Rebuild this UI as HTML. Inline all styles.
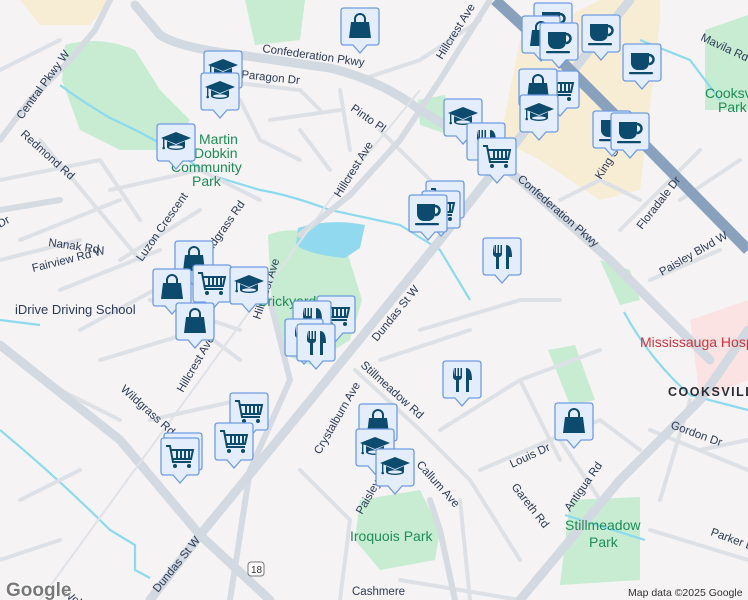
<!DOCTYPE html>
<html><head><meta charset="utf-8"><style>
html,body{margin:0;padding:0;width:748px;height:600px;overflow:hidden;background:#f5f3f4;}
svg{display:block}
text{font-family:"Liberation Sans",sans-serif;}
.lb{font-size:11.5px;fill:#2b3a55;}
.pk{font-size:14px;fill:#1e8c56;}
</style></head><body>
<svg width="748" height="600" viewBox="0 0 748 600" xmlns="http://www.w3.org/2000/svg" style="overflow:hidden">
<defs>
<g id="box">
<path d="M1 4 Q1 1 4 1 H36 Q39 1 39 4 V35 Q39 38 36 38 H27 L20 46 L13 38 H4 Q1 38 1 35 Z" fill="#e4edfc" stroke="#6f9be3" stroke-width="1.3"/>
</g>
<g id="cup"><use href="#box"/><g fill="#0c4a6e"><path d="M9 10 H27 V20 A7 7 0 0 1 20 27 H16 A7 7 0 0 1 9 20 Z"/><path d="M27 12 A4.5 4.5 0 0 1 27 21" fill="none" stroke="#0c4a6e" stroke-width="2.5"/><rect x="7" y="29" width="24" height="2.2" rx="1"/></g></g>
<g id="bag"><use href="#box"/><g fill="#0c4a6e"><path d="M11 15 H29 L31 31 H9 Z"/><path d="M15 16 V12 A5 5 0 0 1 25 12 V16" fill="none" stroke="#0c4a6e" stroke-width="2"/></g></g>
<g id="cart"><use href="#box"/><g fill="none" stroke="#0c4a6e" stroke-width="2"><path d="M6 9 H10 L13 25 H31"/><path d="M11 13 H33 L31 22 H13"/><path d="M17 13 V22 M21 13 V22 M25 13 V22 M29 13 V22"/></g><circle cx="15" cy="29" r="2" fill="#0c4a6e"/><circle cx="29" cy="29" r="2" fill="#0c4a6e"/></g>
<g id="edu"><use href="#box"/><g fill="#0c4a6e"><path d="M20 9 L35 15 L20 21 L5 15 Z"/><path d="M11 18 V24 A9 3 0 0 0 29 24 V18 L20 22 Z"/><rect x="7" y="15" width="1.4" height="9"/><circle cx="7.7" cy="25" r="1.3"/></g><ellipse cx="20" cy="24" rx="7" ry="1.6" fill="#e4edfc"/></g>
<g id="rest"><use href="#box"/><g fill="#0c4a6e"><path d="M11 8 V17 A3 3 0 0 0 14 20 V32 H17 V20 A3 3 0 0 0 20 17 V8 H18.5 V16 H17 V8 H15.5 V16 H14 V8 H12.5 V16 Z"/><path d="M24 32 V8 C29 8 30 14 30 20 L27 20 V32 Z"/></g></g>
</defs>

<path d="M20 0 H110 L90 25 H40 Z" fill="#f7ecd4"/>
<path d="M520 40 L600 0 H660 V20 L640 190 L600 200 L540 160 L500 140 Z" fill="#f7edd5"/>
<path d="M690 320 L748 300 V380 L700 400 Z" fill="#fbe3e3"/>

<path d="M65 45 Q100 35 135 50 L160 90 L190 120 L170 150 L120 150 L80 130 L62 80 Z" fill="#c7ecd2"/>
<path d="M245 0 H305 L300 40 L255 45 Z" fill="#c7ecd2"/>
<path d="M268 235 Q300 222 345 245 L362 300 L350 340 L310 365 L285 355 L272 310 Z" fill="#c7ecd2"/>
<path d="M418 100 L445 95 L450 135 L420 125 Z" fill="#c7ecd2"/>
<path d="M360 500 L420 490 L440 530 L435 560 L380 570 L355 540 Z" fill="#c7ecd2"/>
<path d="M570 500 L640 497 L640 580 L560 585 Z" fill="#c7ecd2"/>
<path d="M705 30 L748 15 V110 L705 110 Z" fill="#c7ecd2"/>
<path d="M548 350 L575 345 L595 400 L570 405 Z" fill="#c7ecd2"/>
<path d="M600 260 L630 270 L640 300 L620 305 Z" fill="#c7ecd2"/>

<path d="M298 228 Q330 218 365 225 L360 248 L345 258 Q310 255 296 245 Z" fill="#90d9ee"/>
<g fill="none" stroke="#8cdaee" stroke-width="2.2">
<path d="M60 85 Q80 100 110 118 Q160 140 210 175 L260 190 Q290 195 330 210 L400 225 L440 250 L470 300"/>
<path d="M0 320 L40 325"/>
<path d="M0 430 Q60 480 110 530 L135 545 L135 570 L150 578"/>
<path d="M624 312 Q650 360 690 395 L748 410"/>
<path d="M565 515 L645 540"/>
<path d="M640 40 L690 60 L720 100"/>
</g>

<g fill="none" stroke="#dde1e6" stroke-width="4" stroke-linecap="round">
<path d="M0 70 L60 40 M0 180 L100 160 L140 220 M40 140 L140 260 M20 240 L120 200 M60 290 L160 250 M0 260 L80 240"/>
<path d="M110 190 L200 170 L260 200 M120 260 L200 210 M80 330 L210 260"/>
<path d="M210 80 L300 90 L320 110 M240 100 L260 140 L300 160 M270 120 L340 110 M300 130 L330 170"/>
<path d="M360 80 L420 60 L480 20 M380 130 L430 180 M340 90 L350 150"/>
<path d="M150 300 L240 330 M100 360 L200 330 L240 360 M150 420 L240 400 M40 380 L120 420"/>
<path d="M355 370 L420 430 L470 480 L520 560 M380 360 L440 340 L470 330 M420 330 L520 300 L560 300"/>
<path d="M440 430 L520 380 L600 350 M520 380 L560 460 M480 470 L550 440 L600 420 L640 450"/>
<path d="M560 440 L600 500 M460 500 L470 600 M400 580 L520 600 M300 470 L350 520 L340 600"/>
<path d="M650 430 L748 470 M650 530 L748 560 M680 200 L740 160 M620 230 L700 150 M650 280 L720 250"/>
<path d="M690 400 L660 500 M700 450 L748 440"/>
<path d="M20 500 L80 470 M0 560 L60 540"/>
<path d="M560 200 L600 180 L640 200 M520 180 L560 220"/>
</g>

<g fill="none" stroke="#d5dbe1" stroke-width="6" stroke-linecap="round">
<path d="M0 140 L30 100 L70 60 L95 30 L110 0"/>
<path d="M300 235 L350 195 L400 140 L440 80 L490 0"/>
<path d="M230 600 L250 470 L290 380 L270 300"/>
<path d="M0 210 L60 200"/>
<path d="M455 600 L440 530 L430 500"/>
</g>

<g fill="none" stroke="#d2d9e0" stroke-width="9" stroke-linecap="round">
<path d="M135 5 L160 35 Q180 48 240 55 L330 68 Q380 80 420 110 L470 140 L520 180 L610 260 L710 360"/>
<path d="M150 600 L200 535 L300 413 L390 302 L440 240 L495 170 L545 105 L610 25 L630 0"/>
<path d="M0 345 L120 440 L200 535 L270 600"/>
<path d="M520 600 L620 480 L700 400 L748 330"/>
</g>

<path d="M495 0 L560 60 L640 140 L748 250" fill="none" stroke="#8aa1bd" stroke-width="11"/>
<path d="M40 600 L200 380 L330 200 L420 90" fill="none" stroke="#dfe2e6" stroke-width="2"/>

<text class="lb" transform="translate(262,52) rotate(8)">Confederation Pkwy</text>
<text class="lb" transform="translate(517,180) rotate(41)">Confederation Pkwy</text>
<text class="lb" transform="translate(22,120) rotate(-54)">Central Pkwy W</text>
<text class="lb" transform="translate(20,135) rotate(42)">Redmond Rd</text>
<text class="lb" transform="translate(340,198) rotate(-58)">Hillcrest Ave</text>
<text class="lb" transform="translate(442,60) rotate(-58)">Hillcrest Ave</text>
<text class="lb" transform="translate(260,320) rotate(-72)">Hillcrest Ave</text>
<text class="lb" transform="translate(183,393) rotate(-60)">Hillcrest Ave</text>
<text class="lb" transform="translate(377,342) rotate(-51)">Dundas St W</text>
<text class="lb" transform="translate(158,593) rotate(-51)">Dundas St W</text>
<text class="lb" transform="translate(241,78) rotate(6)">Paragon Dr</text>
<text class="lb" transform="translate(350,110) rotate(35)">Pinto Pl</text>
<text class="lb" transform="translate(48,246) rotate(8)">Nanak Rd</text>
<text class="lb" transform="translate(33,272) rotate(-14)">Fairview Rd W</text>
<text class="lb" transform="translate(142,262) rotate(-55)">Luzon Crescent</text>
<text class="lb" transform="translate(206,260) rotate(-55)">Wildgrass Rd</text>
<text class="lb" transform="translate(120,390) rotate(42)">Wildgrass Rd</text>
<text class="lb" transform="translate(360,366) rotate(42)">Stillmeadow Rd</text>
<text class="lb" transform="translate(320,455) rotate(-60)">Crystalburn Ave</text>
<text class="lb" transform="translate(416,465) rotate(48)">Callum Ave</text>
<text class="lb" transform="translate(512,468) rotate(-25)">Louis Dr</text>
<text class="lb" transform="translate(511,487) rotate(52)">Gareth Rd</text>
<text class="lb" transform="translate(570,512) rotate(-55)">Antigua Rd</text>
<text class="lb" transform="translate(670,428) rotate(20)">Gordon Dr</text>
<text class="lb" transform="translate(710,535) rotate(20)">Parker Dr</text>
<text class="lb" transform="translate(642,230) rotate(-52)">Floradale Dr</text>
<text class="lb" transform="translate(662,276) rotate(-30)">Paisley Blvd W</text>
<text class="lb" transform="translate(700,40) rotate(25)">Mavila Rd</text>
<text class="lb" transform="translate(601,180) rotate(-58)">King St E</text>
<text class="lb" transform="translate(0,228) rotate(-30)">Dr</text>
<text class="lb" transform="translate(62,595) rotate(35)">Wolfedale</text>
<text class="lb" x="352" y="595">Cashmere</text>
<text class="lb" transform="translate(362,515) rotate(-60)">Paisley</text>
<text class="lb" style="font-size:13px" x="15" y="314">iDrive Driving School</text>
<text class="pk" x="199" y="144">Martin</text>
<text class="pk" x="194" y="158">Dobkin</text>
<text class="pk" x="171" y="172">Community</text>
<text class="pk" x="192" y="186">Park</text>
<text class="pk" x="258" y="306">Brickyard</text>
<text class="pk" x="350" y="541">Iroquois Park</text>
<text class="pk" x="565" y="530">Stillmeadow</text>
<text class="pk" x="589" y="547">Park</text>
<text class="pk" x="705" y="98">Cooksv</text>
<text class="pk" x="718" y="112">Park</text>
<text style="font-size:14px;fill:#d3323c" x="640" y="347">Mississauga Hosp</text>
<text style="font-size:12.5px;fill:#2b2b33;font-weight:bold;letter-spacing:1.5px" x="668" y="396">COOKSVILL</text>
<rect x="248" y="562" width="16" height="14" rx="3" fill="#fff" stroke="#777"/>
<text x="251" y="573" style="font-size:10px;fill:#333">18</text>
<rect x="624" y="584" width="124" height="16" fill="#f5f3f4" opacity="0.8"/>
<text x="628" y="596" style="font-size:10.5px;fill:#333">Map data ©2025 Google</text>
<text x="6" y="596" style="font-size:19px;font-weight:bold;fill:#777;stroke:#fff;stroke-width:1.5;paint-order:stroke">Google</text>

<use href="#bag" x="340" y="7"/>
<use href="#edu" x="203" y="50"/>
<use href="#edu" x="200" y="72"/>
<use href="#edu" x="156" y="123"/>
<use href="#bag" x="174" y="240"/>
<use href="#bag" x="152" y="268"/>
<use href="#cart" x="192" y="264"/>
<use href="#edu" x="229" y="266"/>
<use href="#bag" x="175" y="302"/>
<use href="#cart" x="316" y="295"/>
<use href="#rest" x="292" y="300"/>
<use href="#rest" x="284" y="318"/>
<use href="#rest" x="296" y="323"/>
<use href="#cart" x="229" y="392"/>
<use href="#cart" x="214" y="422"/>
<use href="#cart" x="163" y="432"/>
<use href="#cart" x="160" y="437"/>
<use href="#bag" x="358" y="403"/>
<use href="#edu" x="355" y="428"/>
<use href="#edu" x="375" y="448"/>
<use href="#rest" x="442" y="360"/>
<use href="#rest" x="482" y="237"/>
<use href="#cart" x="425" y="180"/>
<use href="#cart" x="421" y="190"/>
<use href="#cup" x="408" y="194"/>
<use href="#edu" x="443" y="98"/>
<use href="#rest" x="466" y="122"/>
<use href="#cart" x="477" y="137"/>
<use href="#cup" x="533" y="2"/>
<use href="#bag" x="521" y="15"/>
<use href="#cup" x="539" y="22"/>
<use href="#cup" x="581" y="14"/>
<use href="#cup" x="622" y="43"/>
<use href="#cart" x="540" y="70"/>
<use href="#bag" x="518" y="68"/>
<use href="#edu" x="519" y="94"/>
<use href="#cup" x="592" y="110"/>
<use href="#cup" x="610" y="112"/>
<use href="#bag" x="554" y="402"/>
</svg>
</body></html>
